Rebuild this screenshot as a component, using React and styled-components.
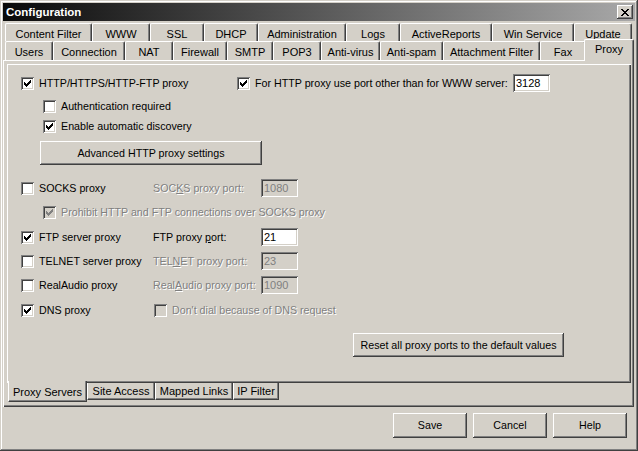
import React from 'react';
import styled, { createGlobalStyle, css } from 'styled-components';

const FACE = '#d4d0c8';

const GlobalStyle = createGlobalStyle`
  html, body {
    margin: 0;
    padding: 0;
    background: ${FACE};
  }
  body {
    font-family: "Liberation Sans", Arial, sans-serif;
    font-size: 10.7px;
    color: #000;
  }
  * {
    box-sizing: border-box;
  }
`;

const raised = css`
  box-shadow: inset -1px -1px #404040, inset 1px 1px #fff, inset -2px -2px #808080, inset 2px 2px ${FACE};
`;

const sunken = css`
  box-shadow: inset 1px 1px #808080, inset -1px -1px #fff, inset 2px 2px #404040, inset -2px -2px ${FACE};
`;

const Window = styled.div`
  width: 638px;
  height: 451px;
  padding: 3px;
  display: flex;
  flex-direction: column;
  background: ${FACE};
  box-shadow: inset -1px -1px #404040, inset 1px 1px ${FACE}, inset -2px -2px #808080, inset 2px 2px #fff;
`;

const TitleBar = styled.div`
  height: 18px;
  flex: none;
  display: flex;
  align-items: center;
  justify-content: space-between;
  padding: 0 2px 0 2px;
  background: linear-gradient(to right, #0a0a0a, #a8a8a8);
`;

const Title = styled.span`
  color: #fff;
  font-weight: bold;
  font-size: 11.5px;
  padding-left: 1px;
`;

const CloseButton = styled.div`
  width: 16px;
  height: 14px;
  display: flex;
  align-items: center;
  justify-content: center;
  background: ${FACE};
  ${raised};
`;

const TabArea = styled.div`
  margin-top: 2px;
  display: flex;
  flex-direction: column;
`;

const TabRow = styled.div`
  display: flex;
  align-items: flex-end;
  height: ${p => p.h}px;
  padding-left: 2px;
`;

const Tab = styled.div`
  flex: none;
  width: ${p => p.w}px;
  height: ${p => p.h}px;
  padding-top: ${p => p.pt}px;
  display: flex;
  align-items: center;
  justify-content: center;
  white-space: nowrap;
  font-size: 11px;
  background: ${FACE};
  border-top: 1px solid #fff;
  border-left: 1px solid #fff;
  border-right: 1px solid #404040;
  border-radius: 2px 2px 0 0;
  box-shadow: inset -1px 0 #808080;
  ${p => p.active && css`
    position: relative;
    z-index: 1;
    width: ${p.w + 4}px;
    height: ${p.h + 3}px;
    margin: 0 -2px -1px;
    padding-top: 0;
    padding-bottom: 3px;
  `}
`;

const Panel = styled.div`
  height: 347px;
  flex: none;
  margin-right: 1px;
  padding: 4px 3px 0 4px;
  display: flex;
  flex-direction: column;
  box-shadow: inset 1px 1px #fff, inset -1px -1px #404040, inset -2px -2px #808080;
`;

const InnerPanel = styled.div`
  height: 319px;
  flex: none;
  padding: 9px 0 0 14px;
  display: flex;
  flex-direction: column;
  box-shadow: inset 1px 1px #fff, inset -1px -1px #404040, inset -2px -2px #808080;
`;

const Row = styled.div`
  height: 20px;
  display: flex;
  align-items: center;
  margin-top: ${p => p.mt || 0}px;
  margin-left: ${p => p.indent || 0}px;
`;

const GridRow = styled.div`
  height: 20px;
  display: grid;
  grid-template-columns: ${p => p.cols};
  align-items: center;
  margin-top: ${p => p.mt || 0}px;
`;

const CheckLabel = styled.label`
  display: flex;
  align-items: center;
  gap: 5px;
  white-space: nowrap;
`;

const Box = styled.span`
  width: 13px;
  height: 13px;
  flex: none;
  display: flex;
  align-items: center;
  justify-content: center;
  background: ${p => (p.disabled ? FACE : '#fff')};
  ${sunken};
`;

const Text = styled.span`
  white-space: nowrap;
  color: ${p => (p.disabled ? '#808080' : '#000')};
  text-shadow: ${p => (p.disabled ? '1px 1px 0 #fff' : 'none')};
`;

const Field = styled.div`
  width: 37px;
  height: 18px;
  padding: 0 3px 1px;
  display: flex;
  align-items: center;
  font-size: 11px;
  background: ${p => (p.disabled ? FACE : '#fff')};
  color: ${p => (p.disabled ? '#808080' : '#000')};
  ${sunken};
`;

const Button = styled.button`
  width: ${p => p.w}px;
  height: ${p => p.h || 24}px;
  margin-top: ${p => p.mt || 0}px;
  margin-left: ${p => p.ml || 0}px;
  padding: 0 0 1px;
  border: none;
  font-family: inherit;
  font-size: 10.7px;
  color: #000;
  background: ${FACE};
  ${raised};
`;

const SubTabRow = styled.div`
  height: 19px;
  flex: none;
  display: flex;
  align-items: flex-start;
  padding-left: 1px;
`;

const SubTab = styled.div`
  flex: none;
  width: ${p => p.w}px;
  height: 17px;
  display: flex;
  align-items: center;
  justify-content: center;
  white-space: nowrap;
  font-size: 11px;
  background: ${FACE};
  border-left: 1px solid #fff;
  border-right: 1px solid #404040;
  border-bottom: 1px solid #404040;
  box-shadow: inset -1px -1px #808080;
  ${p => p.active && css`
    position: relative;
    z-index: 1;
    height: 21px;
    margin-top: -2px;
    padding-top: 2px;
  `}
`;

const Footer = styled.div`
  display: flex;
  justify-content: flex-end;
  gap: 6px;
  padding: 6px 8px 0 0;
`;

const CheckMark = ({ color }) => (
  <svg width="7" height="7" viewBox="0 0 7 7" shapeRendering="crispEdges">
    <path
      fill={color}
      d="M0 2h1v3H0zM1 3h1v3H1zM2 4h1v3H2zM3 3h1v3H3zM4 2h1v3H4zM5 1h1v3H5zM6 0h1v3H6z"
    />
  </svg>
);

const CloseGlyph = () => (
  <svg width="8" height="7" viewBox="0 0 8 7" shapeRendering="crispEdges">
    <path
      fill="#000"
      d="M0 0h2v1H0zM6 0h2v1H6zM1 1h2v1H1zM5 1h2v1H5zM2 2h4v1H2zM3 3h2v1H3zM2 4h4v1H2zM1 5h2v1H1zM5 5h2v1H5zM0 6h2v1H0zM6 6h2v1H6z"
    />
  </svg>
);

const Check = ({ checked, disabled, children }) => (
  <CheckLabel>
    <Box disabled={disabled}>
      {checked && <CheckMark color={disabled ? '#808080' : '#000'} />}
    </Box>
    <Text disabled={disabled}>{children}</Text>
  </CheckLabel>
);

const topTabs = [
  ['Content Filter', 87],
  ['WWW', 58],
  ['SSL', 54],
  ['DHCP', 54],
  ['Administration', 88],
  ['Logs', 54],
  ['ActiveReports', 92],
  ['Win Service', 82],
  ['Update', 58],
];

const lowerTabs = [
  ['Users', 48],
  ['Connection', 72],
  ['NAT', 48],
  ['Firewall', 54],
  ['SMTP', 46],
  ['POP3', 48],
  ['Anti-virus', 59],
  ['Anti-spam', 63],
  ['Attachment Filter', 97],
  ['Fax', 46],
  ['Proxy', 46],
];

const subTabs = [
  ['Proxy Servers', 79],
  ['Site Access', 68],
  ['Mapped Links', 78],
  ['IP Filter', 46],
];

const PORT_COLS = '132px 108px 37px';

const App = () => {
  return (
    <>
      <GlobalStyle />
      <Window>
        <TitleBar>
          <Title>Configuration</Title>
          <CloseButton>
            <CloseGlyph />
          </CloseButton>
        </TitleBar>

        <TabArea>
          <TabRow h={18}>
            {topTabs.map(([name, w]) => (
              <Tab key={name} w={w} h={18} pt={2}>{name}</Tab>
            ))}
          </TabRow>
          <TabRow h={19}>
            {lowerTabs.map(([name, w]) => (
              <Tab key={name} w={w} h={19} pt={1} active={name === 'Proxy'}>{name}</Tab>
            ))}
          </TabRow>
        </TabArea>

        <Panel>
          <InnerPanel>
            <GridRow cols="216px 276px 37px">
              <Check checked>HTTP/HTTPS/HTTP-FTP proxy</Check>
              <Check checked>For HTTP proxy use port other than for WWW server:</Check>
              <Field>3128</Field>
            </GridRow>
            <Row mt={3} indent={22}>
              <Check>Authentication required</Check>
            </Row>
            <Row indent={22}>
              <Check checked>Enable automatic discovery</Check>
            </Row>
            <Button w={222} mt={5} ml={19}>Advanced HTTP proxy settings</Button>

            <GridRow cols={PORT_COLS} mt={13}>
              <Check>SOCKS proxy</Check>
              <Text disabled>SOC<u>K</u>S proxy port:</Text>
              <Field disabled>1080</Field>
            </GridRow>
            <Row mt={4} indent={22}>
              <Check checked disabled>Prohibit HTTP and FTP connections over SOCKS proxy</Check>
            </Row>
            <GridRow cols={PORT_COLS} mt={5}>
              <Check checked>FTP server proxy</Check>
              <Text>FTP proxy <u>p</u>ort:</Text>
              <Field>21</Field>
            </GridRow>
            <GridRow cols={PORT_COLS} mt={4}>
              <Check>TELNET server proxy</Check>
              <Text disabled>TEL<u>N</u>ET proxy port:</Text>
              <Field disabled>23</Field>
            </GridRow>
            <GridRow cols={PORT_COLS} mt={4}>
              <Check>RealAudio proxy</Check>
              <Text disabled>Real<u>A</u>udio proxy port:</Text>
              <Field disabled>1090</Field>
            </GridRow>
            <GridRow cols="133px auto" mt={5}>
              <Check checked>DNS proxy</Check>
              <Check disabled>Don't dial because of DNS request</Check>
            </GridRow>

            <Button w={211} mt={13} ml={332}>Reset all proxy ports to the default values</Button>
          </InnerPanel>
          <SubTabRow>
            {subTabs.map(([name, w]) => (
              <SubTab key={name} w={w} active={name === 'Proxy Servers'}>{name}</SubTab>
            ))}
          </SubTabRow>
        </Panel>

        <Footer>
          <Button w={74} h={25}>Save</Button>
          <Button w={74} h={25}>Cancel</Button>
          <Button w={74} h={25}>Help</Button>
        </Footer>
      </Window>
    </>
  );
};

export default App;
